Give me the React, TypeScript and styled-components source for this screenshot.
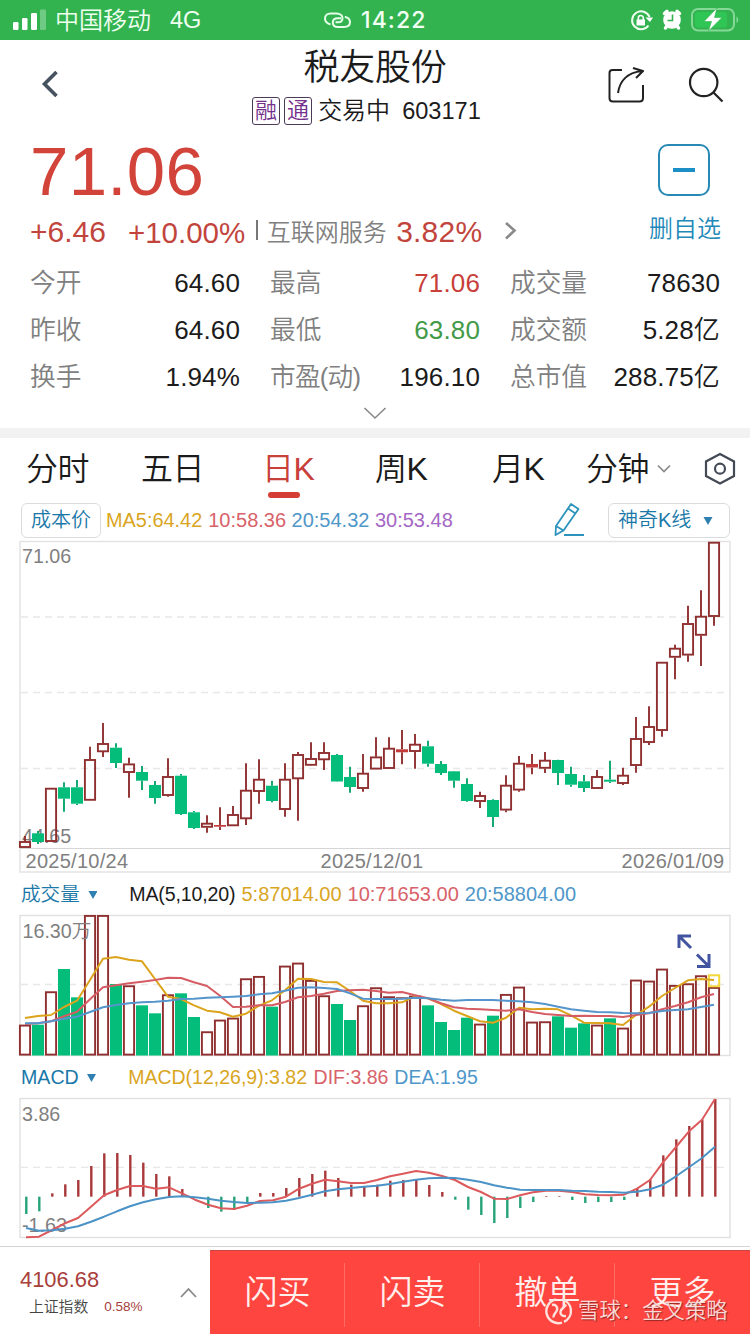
import React from 'react';
import styled, { createGlobalStyle } from 'styled-components';

const C = {
  up: '#c8403a',
  red: '#c2453d',
  candle: '#8f2f30',
  green: '#04bd7b',
  greenEdge: '#0aa56c',
  yellow: '#d9a51f',
  pink: '#d8626a',
  blue: '#4f97c9',
  purple: '#a567c4',
  link: '#1a78a8',
  gray: '#808080',
  ink: '#1b1b1b',
};

const GlobalStyle = createGlobalStyle`
  * { box-sizing: border-box; }
  body {
    margin: 0;
    background: #fff;
    color: ${C.ink};
    font-family: "Liberation Sans", "Noto Sans CJK SC", sans-serif;
    font-weight: 350;
  }
  svg { display: block; flex: none; }
`;

const Page = styled.div`
  width: 750px;
  height: 1334px;
  overflow: hidden;
  display: flex;
  flex-direction: column;
  background: #fff;
`;

const Label = styled.span<{ $size: number; $color?: string; $ls?: number; $ml?: number; $weight?: number }>`
  font-size: ${p => p.$size}px;
  line-height: ${p => Math.round(p.$size * 1.2)}px;
  color: ${p => p.$color ?? C.ink};
  letter-spacing: ${p => p.$ls ?? 0}px;
  margin-left: ${p => p.$ml ?? 0}px;
  font-weight: ${p => p.$weight ?? 350};
  white-space: nowrap;
`;

/* status bar */
const StatusBar = styled.div`
  height: 40px;
  flex: none;
  background: #32b350;
  display: grid;
  grid-template-columns: 323px 1fr 122px;
  align-items: center;
`;
const StatusGroup = styled.div`
  display: flex;
  align-items: center;
  height: 40px;
`;
const Clock = styled.span`
  font-family: Inter, sans-serif;
  font-weight: 500;
  font-size: 23px;
  line-height: 26px;
  letter-spacing: 1.1px;
  color: #f2fff3;
  margin-left: 9px;
`;

/* header */
const Header = styled.header`
  height: 92px;
  flex: none;
  display: grid;
  grid-template-columns: 200px 350px 200px;
`;
const HeaderLeft = styled.div`
  padding: 30px 0 0 40px;
`;
const HeaderRight = styled.div`
  display: flex;
  padding: 26px 0 0 56px;
  gap: 43px;
`;
const TitleColumn = styled.div`
  display: flex;
  flex-direction: column;
  align-items: center;
  padding-top: 6px;
`;
const SubTitle = styled.div`
  display: flex;
  align-items: center;
  margin: 7px 17px 0 0;
`;
const Tag = styled.span`
  width: 28px;
  height: 28px;
  margin-right: 4px;
  border: 1px solid #4b3a58;
  border-radius: 3px;
  color: #74318c;
  font-size: 22px;
  line-height: 26px;
  text-align: center;
`;

/* quote */
const Quote = styled.section`
  height: 296px;
  flex: none;
  display: flex;
  flex-direction: column;
`;
const QuoteTop = styled.div`
  height: 128px;
  display: flex;
  justify-content: space-between;
`;
const QuoteLeft = styled.div`
  padding: 0 0 0 30px;
`;
const Price = styled.div`
  font-size: 69px;
  line-height: 80px;
  letter-spacing: 0.3px;
  color: #d2433a;
`;
const ChangeRow = styled.div`
  display: flex;
  align-items: center;
  height: 36px;
  margin-top: 2px;
`;
const Divider = styled.i`
  width: 1.5px;
  height: 20px;
  background: #777;
  margin: 0 9px 4px 11px;
`;
const Favourite = styled.div`
  width: 100px;
  margin-right: 15px;
  padding-top: 12px;
  display: flex;
  flex-direction: column;
  align-items: center;
`;
const MinusBox = styled.div`
  width: 52px;
  height: 52px;
  border: 2px solid #2889b4;
  border-radius: 10px;
  display: flex;
  align-items: center;
  justify-content: center;
  margin: 0 0 18px -3px;
  &::after {
    content: '';
    width: 22px;
    height: 4px;
    background: #1c8fc6;
  }
`;
const Stats = styled.div`
  display: grid;
  grid-template-columns: 210px 210px 210px;
  column-gap: 30px;
  grid-auto-rows: 46.7px;
  padding: 0.6px 0 0 30px;
`;
const Stat = styled.div`
  display: flex;
  justify-content: space-between;
  align-items: center;
`;
const More = styled.div`
  padding: 6px 0 0 363px;
`;
const Band = styled.div`
  height: 10px;
  flex: none;
  background: #f2f2f2;
`;

/* tabs */
const Tabs = styled.nav`
  height: 62px;
  flex: none;
  display: flex;
  align-items: center;
  padding: 0 0 0 26px;
`;
const Tab = styled.div<{ $w: number; $active?: boolean }>`
  width: ${p => p.$w}px;
  height: 62px;
  font-size: 32px;
  line-height: 62px;
  letter-spacing: -0.5px;
  white-space: nowrap;
  color: ${p => (p.$active ? C.up : C.ink)};
  display: flex;
  align-items: center;
  position: relative;
  &::after {
    content: '';
    display: ${p => (p.$active ? 'block' : 'none')};
    position: absolute;
    left: 6px;
    bottom: 2px;
    width: 32px;
    height: 6px;
    border-radius: 3px;
    background: #d43c36;
  }
`;

/* chart section */
const Legend = styled.div<{ $h: number }>`
  height: ${p => p.$h}px;
  flex: none;
  display: flex;
  align-items: center;
  padding: 0 20px 0 21px;
`;
const Box = styled.div<{ $w: number }>`
  width: ${p => p.$w}px;
  height: 35px;
  border: 1px solid #d9dcdf;
  border-radius: 6px;
  display: flex;
  align-items: center;
  padding-left: 9px;
`;
const Push = styled.div`
  margin-left: auto;
  display: flex;
  align-items: center;
  gap: 23px;
`;
const Chart = styled.svg`
  font-family: "Liberation Sans", "Noto Sans CJK SC", sans-serif;
  font-size: 20px;
`;

/* bottom bar */
const BottomBar = styled.footer`
  height: 88px;
  margin-top: auto;
  flex: none;
  border-top: 1px solid #d4d4d4;
  display: flex;
  position: relative;
`;
const Index = styled.div`
  width: 210px;
  display: flex;
  justify-content: space-between;
  padding: 20px 13px 0 20px;
`;
const IndexSub = styled.div`
  display: flex;
  align-items: center;
  margin-top: 5px;
`;
const Actions = styled.div`
  flex: 1;
  margin-top: 3px;
  background: #ff453f;
  border-top: 1px solid #c94740;
  display: grid;
  grid-template-columns: repeat(4, 135px);
`;
const Action = styled.button`
  border: 0;
  padding: 0;
  background: linear-gradient(#ff6a61, #ff6a61) right 12px / 1px 64px no-repeat;
  color: #fff0ee;
  font: 350 33px/82px "Liberation Sans", "Noto Sans CJK SC", sans-serif;
  text-align: center;
  &:last-child { background: none; }
`;
const Watermark = styled.div`
  position: absolute;
  left: 545px;
  top: 50px;
  display: flex;
  align-items: center;
  gap: 5px;
  color: rgba(255, 232, 229, 0.92);
  font-size: 21.4px;
  line-height: 28px;
  white-space: nowrap;
  text-shadow: 1px 1px 1px rgba(110, 30, 30, 0.75);
`;

const X0 = 25;
const PITCH = 13;

type Candle = [up: 0 | 1, high: number, top: number, bottom: number, low: number];
const candles: Candle[] = [
  [1, 836, 841.3, 847.7, 848], [0, 831, 833.3, 842, 844], [1, 788, 788, 841.7, 841.7], [0, 782.3, 787.3, 798.7, 811.7],
  [0, 780, 787.3, 803.7, 805], [1, 746.7, 759.3, 800.5, 800.5], [1, 723, 743.3, 752, 757], [0, 743.3, 747.7, 763, 768],
  [1, 757.7, 763.7, 772.7, 797.7], [0, 766, 772, 780.7, 790], [0, 781, 785, 798, 803.7], [1, 758.3, 776.3, 795.7, 796.7],
  [0, 774, 775.7, 814, 815], [0, 811, 812.3, 828, 829], [1, 815.3, 823, 827.5, 832.7], [1, 807.3, 825, 826.7, 830],
  [1, 806, 814.3, 826, 826], [1, 763.3, 790, 819, 825], [1, 759.3, 779, 791.7, 803.7], [0, 780.7, 785.7, 801, 802.3],
  [1, 763.3, 779, 809.7, 816.7], [1, 752, 754.3, 779, 820.7], [1, 742.3, 758.3, 765.5, 765.7], [1, 742.3, 752.3, 760, 770],
  [0, 754, 755, 781.5, 781.7], [0, 766.7, 777, 787, 792.7], [1, 754, 773, 788.7, 791.7], [1, 737.3, 756.7, 769.3, 769.3],
  [1, 737.3, 748, 768.7, 768.7], [1, 730, 749.3, 752.3, 764.3], [1, 734, 744, 751.7, 768.7], [0, 740.7, 746.3, 763.7, 766.7],
  [0, 761, 764, 773, 775], [0, 771, 771.3, 780.7, 787.7], [0, 778.3, 784, 801, 801.7], [1, 791.7, 795.3, 801.7, 808],
  [0, 799.3, 800, 817, 827], [1, 775.3, 785, 810.3, 812.3], [1, 756, 763, 790.3, 791.7], [1, 754, 764, 767.5, 774.3],
  [1, 752, 760, 768.5, 773], [0, 759.7, 760, 773, 785], [0, 766.7, 774, 784.7, 786.7], [0, 775, 781.3, 788, 792],
  [1, 770, 776.3, 788.7, 789], [0, 760.7, 779.7, 781.7, 783], [1, 767.7, 775, 783.7, 785], [1, 717, 738.3, 765.7, 772.7],
  [1, 706.3, 726.3, 742.7, 745], [1, 662, 662, 730.7, 736.7], [1, 644.7, 648, 657.5, 679.3], [1, 605.7, 623.3, 655.3, 661.7],
  [1, 590.3, 616, 635.5, 666], [1, 542, 542, 616.7, 625.7],
];

/* volume bar tops, in thirds of a pixel below y = 880 */
const volumes = [
  434, 434, 334, 267, 352, 105, 105, 312, 316, 376, 400, 343, 340, 411, 454, 419, 413, 295, 288, 380, 257, 248, 300, 346,
  372, 420, 376, 322, 349, 352, 347, 376, 426, 450, 413, 431, 407, 342, 320, 425, 424, 409, 443, 430, 434, 415, 443, 299,
  302, 266, 315, 310, 286, 321,
];
const volMa5 = [
  414, 408, 405, 381, 362, 300, 236, 231, 239, 244, 297, 350, 357, 376, 392, 397, 410, 401, 377, 361, 331, 296, 297, 306,
  307, 333, 362, 370, 370, 367, 350, 355, 372, 392, 408, 424, 428, 413, 383, 388, 386, 388, 406, 428, 429, 430, 435, 405,
  380, 348, 324, 301, 297, 300,
];
const volMa10 = [
  432, 430, 424, 409, 395, 358, 322, 316, 310, 305, 300, 293, 294, 307, 318, 347, 381, 380, 376, 376, 366, 352, 348, 341,
  333, 331, 329, 333, 338, 336, 346, 355, 370, 382, 386, 388, 390, 392, 388, 396, 402, 405, 408, 407, 408, 408, 411, 405,
  400, 388, 378, 367, 352, 342,
];
const volMa20 = [
  430, 430, 424, 416, 410, 396, 382, 375, 370, 367, 365, 362, 357, 356, 353, 352, 350, 348, 343, 340, 332, 323, 322, 324,
  327, 340, 356, 357, 357, 356, 353, 355, 359, 362, 360, 360, 360, 362, 364, 367, 372, 380, 388, 392, 396, 397, 399, 400,
  399, 393, 390, 388, 381, 374,
];

/* MACD values, in thirds of a pixel below y = 1090; the zero line is 320 */
const macd = [
  372, 364, 310, 283, 270, 228, 190, 189, 195, 218, 252, 259, 297, 320, 354, 365, 360, 340, 309, 309, 294, 264, 252, 242,
  264, 284, 290, 284, 272, 270, 268, 285, 306, 329, 359, 375, 399, 384, 354, 336, 318, 318, 330, 339, 336, 336, 330, 297,
  268, 196, 148, 108, 89, 27,
];
const dif = [
  442, 440, 420, 400, 384, 350, 316, 300, 288, 288, 296, 292, 310, 329, 344, 355, 357, 347, 333, 331, 320, 296, 281, 269,
  274, 279, 279, 270, 259, 251, 243, 248, 258, 270, 291, 306, 326, 327, 316, 307, 302, 302, 306, 313, 315, 316, 314, 296,
  270, 217, 171, 124, 89, 27,
];
const dea = [
  414, 422, 421, 416, 409, 395, 380, 364, 349, 337, 328, 321, 319, 322, 326, 332, 336, 339, 338, 337, 332, 324, 314, 304,
  298, 294, 290, 287, 282, 275, 269, 265, 263, 264, 269, 276, 286, 293, 299, 300, 300, 300, 302, 303, 305, 306, 308, 305,
  298, 284, 259, 232, 204, 170,
];

const line = (vals: number[], base: number, x0: number) =>
  vals.map((v, i) => `${(x0 + i * PITCH).toFixed(1)},${(base + v / 3).toFixed(1)}`).join(' ');

const Line = ({ vals, base, x0, color }: { vals: number[]; base: number; x0: number; color: string }) => (
  <polyline points={line(vals, base, x0)} fill="none" stroke={color} strokeWidth={2} strokeLinejoin="round" />
);
const Grid = ({ ys }: { ys: number[] }) => (
  <>
    {ys.map(y => (
      <line key={y} x1={21} x2={730} y1={y} y2={y} stroke="#e8e8e8" strokeWidth={1.3} strokeDasharray="7 5" />
    ))}
  </>
);

function PriceChart() {
  return (
    <Chart width={750} height={334} viewBox="0 540 750 334">
      <g fill={C.gray}>
        <text x={22} y={562.5} fontSize={19.7}>71.06</text>
        <text x={22} y={842.7} fontSize={19.7}>44.65</text>
        <text x={25.5} y={868} letterSpacing={0.27}>2025/10/24</text>
        <text x={320.5} y={868} letterSpacing={0.27}>2025/12/01</text>
        <text x={621.5} y={868} letterSpacing={0.27}>2026/01/09</text>
      </g>
      <Grid ys={[617, 692.5, 768.5]} />
      <rect x={20} y={541.5} width={710} height={330.5} fill="none" stroke="#e2e2e2" strokeWidth={1.4} />
      <line x1={20} x2={730} y1={848.5} y2={848.5} stroke="#d6d6d6" />
      {candles.map(([up, h, t, b, l], i) => {
        const x = X0 + i * PITCH;
        const color = up ? C.candle : C.greenEdge;
        return (
          <g key={i} stroke={color} strokeWidth={1.9}>
            {h < t && <line x1={x} x2={x} y1={h} y2={t} />}
            {l > b && <line x1={x} x2={x} y1={b} y2={l} />}
            {b - t < 4 ? (
              <rect x={x - 6} y={t} width={12} height={b - t} fill={up ? '#c23a3a' : C.green} stroke="none" />
            ) : up ? (
              <rect x={x - 5.1} y={t + 0.7} width={10.2} height={b - t - 1.4} fill="none" />
            ) : (
              <rect x={x - 6} y={t} width={12} height={b - t} fill={C.green} stroke="none" />
            )}
          </g>
        );
      })}
    </Chart>
  );
}

function VolumeChart() {
  return (
    <Chart width={750} height={145} viewBox="0 913 750 145">
      <Grid ys={[984.5]} />
      <rect x={20} y={915.5} width={710} height={140} fill="none" stroke="#e0e0e0" strokeWidth={1.4} />
      {volumes.map((v, i) => {
        const x = X0 + i * PITCH;
        const y = 880 + v / 3;
        return candles[i][0] ? (
          <rect key={i} x={x - 5.1} y={y + 0.9} width={10.2} height={1054.6 - y - 0.9} fill="none" stroke={C.candle} strokeWidth={1.9} />
        ) : (
          <rect key={i} x={x - 6} y={y} width={12} height={1055.5 - y} fill={C.green} />
        );
      })}
      <rect x={708.8} y={975.3} width={10.4} height={11} fill="none" stroke="#f3d83a" strokeWidth={2} />
      <text x={22.5} y={937.5} fontSize={19.7} fill={C.gray}>16.30万</text>
      <Line vals={volMa5} base={880} x0={X0} color="#dba41c" />
      <Line vals={volMa10} base={880} x0={X0} color="#d65c64" />
      <Line vals={volMa20} base={880} x0={X0} color="#5595cb" />
      <g fill="none" stroke="#42549f" strokeWidth={3}>
        <path d="M679 948V936H691M679.5 936.5L691 948" />
        <path d="M697 966.5H709V954M697 954.5L708.5 966" />
      </g>
    </Chart>
  );
}

function MacdChart() {
  return (
    <Chart width={750} height={144} viewBox="0 1096 750 144">
      <text x={22} y={1120.5} fontSize={19.7} fill={C.gray}>3.86</text>
      <text x={22} y={1232} fontSize={19.7} fill={C.gray}>-1.63</text>
      <Grid ys={[1167.3]} />
      <rect x={20} y={1098.5} width={710} height={139} fill="none" stroke="#e0e0e0" strokeWidth={1.4} />
      {macd.map((v, i) => {
        const top = Math.min(v, 320);
        return (
          <rect
            key={i}
            x={25.1 + i * PITCH}
            y={1090 + top / 3}
            width={2.4}
            height={Math.abs(v - 320) / 3}
            fill={v < 320 ? '#a8383a' : '#27a37a'}
          />
        );
      })}
      <Line vals={dif} base={1090} x0={26} color="#dc5a5c" />
      <Line vals={dea} base={1090} x0={26} color="#4b93c6" />
    </Chart>
  );
}

const Triangle = ({ ml }: { ml: number }) => (
  <svg width={9 + ml} height={10} viewBox={`${-ml} -2 ${9 + ml} 10`}>
    <path d="M0 0H9L4.5 8Z" fill="#2f7fb0" />
  </svg>
);

const stats: [string, string, string?, number?][] = [
  ['今开', '64.60'], ['最高', '71.06', C.up], ['成交量', '78630'],
  ['昨收', '64.60'], ['最低', '63.80', '#439a49'], ['成交额', '5.28亿'],
  ['换手', '1.94%'], ['市盈(动)', '196.10', undefined, -0.8], ['总市值', '288.75亿'],
];

export default function App() {
  return (
    <Page>
      <GlobalStyle />
      <StatusBar>
        <StatusGroup>
          <svg width={55} height={40} fill="#fff">
            <rect x={13} y={22} width={5.5} height={8} rx={1.2} />
            <rect x={22} y={18} width={5.5} height={12} rx={1.2} />
            <rect x={31} y={13} width={6} height={17} rx={1.2} />
            <rect x={40} y={9.5} width={6} height={20.5} rx={1.2} opacity={0.3} />
          </svg>
          <Label $size={24} $color="#effff0">中国移动</Label>
          <Label $size={23.5} $color="#effff0" $ml={19}>4G</Label>
        </StatusGroup>
        <StatusGroup>
          <svg width={29} height={40} fill="none" stroke="#e6ffe8" strokeWidth={2}>
            <path d="M7.500 24.500C4 23.500 2 21.200 2 18.500C2 15.500 4.500 13.500 7.500 13.500H13.500C17 13.500 19.500 15.500 19.500 18.200C19.500 20.800 17.500 22.300 15 22.300H12.500" />
            <path d="M18 18.200H15C11.800 18.200 9.800 20 9.800 22.500C9.800 25.200 12 27 15.200 27H21C24.500 27 27 25.200 27 22.300C27 19.500 25 17.500 21.800 16.800" />
          </svg>
          <Clock>14:22</Clock>
        </StatusGroup>
        <svg width={122} height={40} viewBox="628 0 122 40">
          <path d="M648.500 25.500A9 9 0 1 1 649.500 17" fill="none" stroke="#effff0" strokeWidth={2} />
          <path d="M645.500 17.500H653L650 22Z M636.500 19.500H645V25.500H636.500Z" fill="#fff" />
          <path d="M638.300 20V18A2.500 2.500 0 0 1 643.300 18V20" fill="none" stroke="#fff" strokeWidth={1.6} />
          <circle cx={672} cy={20} r={8.800} fill="#fff" />
          <path d="M664.500 13.500L667 11.300M679.500 13.500L677 11.300M667 26L665.500 28M677 26L678.500 28" stroke="#fff" strokeWidth={3.500} strokeLinecap="round" />
          <path d="M672.500 14.500V20.500H667.500" fill="none" stroke="#32b350" strokeWidth={1.600} />
          <rect x={692} y={9} width={42} height={21.500} rx={6} fill="none" stroke="#85d896" strokeWidth={2} />
          <rect x={695} y={12} width={32} height={15.500} rx={3} fill="#2fc656" />
          <path d="M736.500 16.500C738.800 17.500 738.800 22 736.500 23Z" fill="#85d896" />
          <path d="M717 8L704 21.500H711.500L708.500 31L722 17.500H714.500Z" fill="#fff" stroke="#32b350" strokeWidth={0.600} />
        </svg>
      </StatusBar>

      <Header>
        <HeaderLeft>
          <svg width={20} height={28} fill="none" stroke="#47525f" strokeWidth={3.600}>
            <path d="M16.500 2L4.500 14L16.500 26" />
          </svg>
        </HeaderLeft>
        <TitleColumn>
          <Label $size={36} $ls={-0.3}>税友股份</Label>
          <SubTitle>
            <Tag>融</Tag>
            <Tag>通</Tag>
            <Label $size={24} $ml={2}>交易中</Label>
            <Label $size={23.6} $ml={12}>603171</Label>
          </SubTitle>
        </TitleColumn>
        <HeaderRight>
          <svg width={38} height={38} viewBox="607 66 38 38" fill="none" stroke="#222" strokeWidth={2}>
            <path d="M623 70H613.500Q610.500 70 610.500 73V98Q610.500 101.500 614 101.500H640.500Q644 101.500 644 98V85" />
            <path d="M619 93C620.500 82 627.500 72.500 643 71M634 68L644 71L637 78" />
          </svg>
          <svg width={38} height={38} viewBox="687 66 38 38" fill="none" stroke="#222" strokeWidth={2.200}>
            <circle cx={703.700} cy={82.500} r={13.700} />
            <path d="M713.500 92.500L722.500 101.500" />
          </svg>
        </HeaderRight>
      </Header>

      <Quote>
        <QuoteTop>
          <QuoteLeft>
            <Price>71.06</Price>
            <ChangeRow>
              <Label $size={30} $color={C.red}>+6.46</Label>
              <Label $size={29.5} $color={C.red} $ml={22}>+10.00%</Label>
              <Divider />
              <Label $size={24} $color={C.gray}>互联网服务</Label>
              <Label $size={30} $color={C.red} $ml={9.500} $ls={0.2}>3.82%</Label>
              <svg width={36} height={20} viewBox="-22 0 36 20" fill="none" stroke="#8a8a8a" strokeWidth={2.600}>
                <path d="M2 1L10.500 8.500L2 16.500" />
              </svg>
            </ChangeRow>
          </QuoteLeft>
          <Favourite>
            <MinusBox />
            <Label $size={24} $color="#2389b8">删自选</Label>
          </Favourite>
        </QuoteTop>
        <Stats>
          {stats.map(([name, value, color, spacing]) => (
            <Stat key={name}>
              <Label $size={25.700} $color={C.gray} $ls={spacing}>{name}</Label>
              <Label $size={26} $color={color} $ls={0.15}>{value}</Label>
            </Stat>
          ))}
        </Stats>
        <More>
          <svg width={24} height={14} fill="none" stroke="#888" strokeWidth={1.600}>
            <path d="M1.500 1L12 11L22.500 1" />
          </svg>
        </More>
      </Quote>
      <Band />

      <Tabs>
        <Tab $w={115}>分时</Tab>
        <Tab $w={121}>五日</Tab>
        <Tab $w={113} $active>日K</Tab>
        <Tab $w={117}>周K</Tab>
        <Tab $w={94}>月K</Tab>
        <Tab $w={118}>
          分钟
          <svg width={22} height={10} viewBox="-8 0 22 10" fill="none" stroke="#888" strokeWidth={1.600}>
            <path d="M1 1.500L7 7.500L13 1.500" />
          </svg>
        </Tab>
        <svg width={32} height={34} fill="none" stroke="#444a55" strokeWidth={2.200}>
          <path d="M16 2L30 9.500V24L16 31.500L2 24V9.500Z" />
          <circle cx={16} cy={16.700} r={5} />
        </svg>
      </Tabs>

      <Legend $h={40}>
        <Box $w={80}><Label $size={20} $color={C.link}>成本价</Label></Box>
        <Label $size={19.900} $color={C.yellow} $ml={5}>MA5:64.42</Label>
        <Label $size={20} $color={C.pink} $ml={6}>10:58.36</Label>
        <Label $size={20} $color={C.blue} $ml={5.500}>20:54.32</Label>
        <Label $size={20} $color={C.purple} $ml={5.500}>30:53.48</Label>
        <Push>
          <svg width={32} height={36} viewBox="553 502 32 36" fill="none" stroke="#2c93bd" strokeWidth={1.800} strokeLinejoin="round">
            <path d="M571 504L578.500 509L563.500 530.500L555.500 535L556 526ZM568 508.500L575.500 513.500M556 526L563.500 530.500" />
            <path d="M564 535H584" strokeWidth={2} />
          </svg>
          <Box $w={122}>
            <Label $size={20} $color={C.link}>神奇K线</Label>
            <Triangle ml={12.500} />
          </Box>
        </Push>
      </Legend>
      <PriceChart />

      <Legend $h={39}>
        <Label $size={19.600} $color={C.link}>成交量</Label>
        <Triangle ml={8.500} />
        <Label $size={19.600} $ls={-0.150} $ml={32}>MA(5,10,20)</Label>
        <Label $size={20} $color={C.yellow} $ml={6}>5:87014.00</Label>
        <Label $size={20} $color={C.pink} $ml={6}>10:71653.00</Label>
        <Label $size={20} $color={C.blue} $ml={6}>20:58804.00</Label>
      </Legend>
      <VolumeChart />

      <Legend $h={38}>
        <Label $size={19.600} $color={C.link}>MACD</Label>
        <Triangle ml={8} />
        <Label $size={19.500} $color={C.yellow} $ml={32.500}>MACD(12,26,9):3.82</Label>
        <Label $size={19.500} $color={C.pink} $ml={6.500}>DIF:3.86</Label>
        <Label $size={19.500} $color={C.blue} $ml={6}>DEA:1.95</Label>
      </Legend>
      <MacdChart />

      <BottomBar>
        <Index>
          <div>
            <Label $size={21.900} $color="#a8403a" as="div">4106.68</Label>
            <IndexSub>
              <Label $size={14.800} $color="#444" $ml={9}>上证指数</Label>
              <Label $size={13.500} $color="#a8403a" $ml={16}>0.58%</Label>
            </IndexSub>
          </div>
          <svg width={17} height={34} fill="none" stroke="#888" strokeWidth={1.800}>
            <path d="M1 30L8.500 22L16 30" />
          </svg>
        </Index>
        <Actions>
          {['闪买', '闪卖', '撤单', '更多'].map(t => (
            <Action key={t}>{t}</Action>
          ))}
        </Actions>
        <Watermark>
          <svg width={28} height={28} fill="none" stroke="#ffe3df" strokeWidth={2.400}>
            <path d="M11 2.400A12 12 0 1 0 17 25.600" />
            <path d="M17 2.400A12 12 0 0 1 19 24.900" />
            <path d="M7 8C10 7 13 9.500 12 13C11.200 16 8 17 8.500 20.500" />
            <path d="M21 7.500C20 10 16.500 11 15.500 14.500C15 17.500 17.500 19.500 21 19" />
          </svg>
          <span>雪球：金叉策略</span>
        </Watermark>
      </BottomBar>
    </Page>
  );
}
